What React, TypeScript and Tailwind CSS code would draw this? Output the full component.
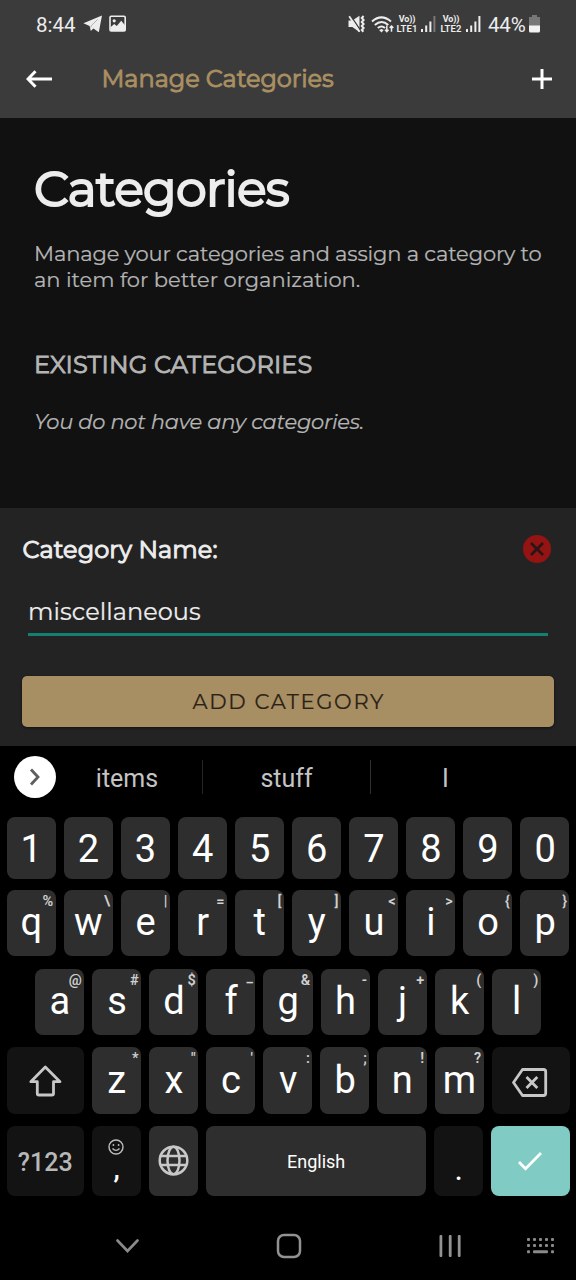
import React from 'react';

const numberRow = ['1', '2', '3', '4', '5', '6', '7', '8', '9', '0'];
const rowOne = [['q', '%'], ['w', '\\'], ['e', '|'], ['r', '='], ['t', '['], ['y', ']'], ['u', '<'], ['i', '>'], ['o', '{'], ['p', '}']];
const rowTwo = [['a', '@'], ['s', '#'], ['d', '$'], ['f', '_'], ['g', '&'], ['h', '-'], ['j', '+'], ['k', '('], ['l', ')']];
const rowThree = [['z', '*'], ['x', '"'], ['c', "'"], ['v', ':'], ['b', ';'], ['n', '!'], ['m', '?']];

function Key({ label, hint }: { label: string; hint?: string }) {
  return (
    <div className="relative flex h-full w-[49.1px] shrink-0 justify-center rounded-lg bg-[#2e2e2e] pt-[13.2px] text-[38px] leading-[38px] text-white">
      <span className="pl-[0.5px]">{label}</span>
      {hint && (
        <span className={`absolute right-[2.5px] text-[14.5px] leading-[16px] font-semibold text-[#d0d0d0] ${hint === '_' ? 'top-[1px]' : 'top-[4px]'}`}>{hint}</span>
      )}
    </div>
  );
}

function VoLte({ n }: { n: number }) {
  return (
    <div className="flex w-[22px] flex-col items-center text-[#ededed]">
      <span className="text-[9px] leading-[10px] font-bold tracking-[-0.1px]">Vo))</span>
      <span className="text-[9.5px] leading-[10px] font-semibold tracking-[0.1px]">LTE{n}</span>
    </div>
  );
}

function Signal({ dim }: { dim?: boolean }) {
  return (
    <svg className="h-4 w-[15px]" viewBox="0 0 15 16" fill="#ededed">
      <rect x="0" y="13" width="2" height="3" />
      <rect x="4.2" y="9.5" width="2" height="6.5" />
      <rect x="8.4" y="5.5" width="2" height="10.5" />
      <rect x="12.4" y="0" width="2" height="16" fill={dim ? '#777777' : '#ededed'} />
    </svg>
  );
}

function StatusBar() {
  return (
    <div className="flex h-[48px] items-center pl-9 font-[Roboto,sans-serif] text-[#ededed]">
      <span className="w-[47px] pt-[2px] text-[20.5px] leading-6">8:44</span>
      <svg className="h-[18px] w-[20px]" viewBox="0 0 20 18" fill="#ededed">
        <path d="M.4 8.300 19 .5l-3.200 16.800-5.400-3.700-2.600 2.300-1.200-5z" />
        <path d="m7.600 12.600 1-2.300 6.200-6" fill="none" stroke="#8a8a8a" strokeWidth=".6" />
      </svg>
      <svg className="ml-[6px] h-[18px] w-[18px]" viewBox="0 0 18 18" fill="none">
        <rect x="1" y="1.2" width="15.2" height="14.8" rx="1.2" stroke="#ededed" strokeWidth="1.6" />
        <circle cx="5.2" cy="5.8" r="1.6" fill="#ededed" />
        <path d="m1.5 12.2 3.700-3.100 2.600 2 4.400-5.300 4.200 5V16H1.5z" fill="#ededed" />
      </svg>
      <svg className="ml-[221px] h-[18px] w-[18px]" viewBox="0 0 18 18" fill="none" stroke="#ededed">
        <path d="M.5 5.600h3.800L11.500.8v16.200l-7.200-5H.5z" fill="#ededed" stroke="none" />
        <path d="m2.400.4 10.600 15.800" stroke="#3b3b3b" strokeWidth="1.4" />
        <path d="m1.200 1.200 10.300 15.600" strokeWidth="1.8" />
        <path d="m15.600 1-1.800 2 1.800 2-1.800 2 1.800 2-1.800 2 1.800 2-1.800 2 1.600 1.700" strokeWidth="2" />
      </svg>
      <svg className="ml-[5px] h-[17px] w-[23px]" viewBox="0 0 23 17" fill="none" stroke="#ededed" strokeWidth="2">
        <path d="M1 5.400Q10.400-2.700 20 5.400M3.800 8.900q6.800-5.800 13.500 0M6.800 12q3.700-3.100 7.200 0" />
        <path d="m8.100 14 2.400 2.500 2.200-2.500-2.200-1z" fill="#ededed" stroke="none" />
        <path d="M15.800 9.500v6M14 13.800l1.800 1.800 1.800-1.800M20.500 15.800V10m-1.800 1.900 1.800-1.800 1.800 1.800" strokeWidth="1.500" />
      </svg>
      <div className="ml-[2px]"><VoLte n={1} /></div>
      <div className="ml-[3px]"><Signal dim /></div>
      <div className="ml-[4px]"><VoLte n={2} /></div>
      <div className="ml-[4px]"><Signal /></div>
      <span className="ml-[7px] w-[41px] pt-[2px] text-[20.5px] leading-6 tracking-[-0.2px]">44%</span>
      <svg className="h-[18px] w-[11px]" viewBox="0 0 11 18">
        <path d="M3 0h5v2h3v9H0V2h3z" fill="#777777" />
        <path d="M0 10.500h11V16a1.500 1.500 0 0 1-1.500 1.500h-8A1.500 1.500 0 0 1 0 16z" fill="#f2f2f2" />
      </svg>
    </div>
  );
}

function Keyboard() {
  return (
    <section className="flex h-[534px] flex-col bg-black font-[Roboto,sans-serif]">
      <div className="flex h-[62px] items-center pl-[14px] text-[25px] text-[#c4c4c4]">
        <div className="flex h-[42px] w-[42px] items-center justify-center rounded-full bg-white">
          <svg className="h-[18px] w-[12px]" viewBox="0 0 12 18" fill="none" stroke="#5e5e5e" strokeWidth="2.800"><path d="m2 1.500 7 7.500-7 7.500" /></svg>
        </div>
        <span className="w-[142px] pt-[3px] text-center">items</span>
        <span className="mr-[1px] ml-[4px] h-[34px] w-px bg-[#242424]" />
        <span className="w-[165px] pt-[3px] text-center">stuff</span>
        <span className="ml-[1px] h-[34px] w-px bg-[#303030]" />
        <span className="w-[149px] pt-[3px] text-center">I</span>
      </div>
      <div className="mt-[9px] flex h-[62px] gap-2 px-[6.5px]">{numberRow.map((n) => <Key key={n} label={n} />)}</div>
      <div className="mt-[11px] flex h-[66px] gap-2 px-[6.5px]">{rowOne.map(([k, h]) => <Key key={k} label={k} hint={h} />)}</div>
      <div className="mt-[12.700px] flex h-[66px] justify-center gap-2">{rowTwo.map(([k, h]) => <Key key={k} label={k} hint={h} />)}</div>
      <div className="mt-[12.700px] flex h-[66.300px] gap-2 px-[6.5px]">
        <div className="flex w-[77.500px] items-center justify-center rounded-lg bg-[#131313]">
          <svg className="h-[32px] w-[34px]" viewBox="0 0 34 32" fill="none" stroke="#c7c7c7" strokeWidth="2.800" strokeLinejoin="round">
            <path d="M17.300 2 2.800 16.700h6.500V28.500q0 1.500 1.500 1.500h13.200q1.500 0 1.500-1.500V16.700h6.500z" />
          </svg>
        </div>
        {rowThree.map(([k, h]) => <Key key={k} label={k} hint={h} />)}
        <div className="flex flex-1 items-center justify-center rounded-lg bg-[#131313]">
          <svg className="mt-[3px] mr-[2px] h-[29px] w-[36px]" viewBox="0 0 36 29" fill="none" stroke="#c7c7c7" strokeWidth="2.800" strokeLinejoin="round">
            <path d="M10.500 1.500h21q2.200 0 2.200 2.200v21.600q0 2.200-2.200 2.200h-21L1.500 14.500zM14.500 9l10.800 11M25.300 9 14.500 20" />
          </svg>
        </div>
      </div>
      <div className="mt-[12.500px] flex h-[69.500px] gap-2 px-[6.5px]">
        <div className="flex w-[77.500px] items-center justify-center rounded-lg bg-[#131313] pt-[3px] text-[25px] font-medium tracking-[0.1px] text-[#b8b8b8]">?123</div>
        <div className="flex w-[49.1px] flex-col items-center rounded-lg bg-[#131313] pt-[13px]">
          <svg className="mr-[1px] h-[16px] w-[16px] shrink-0" viewBox="0 0 16 16" fill="none" stroke="#bdbdbd" strokeWidth="1.400">
            <circle cx="8" cy="8" r="7" /><path d="M4.500 9.500q3.500 3.700 7 0" /><circle cx="5.400" cy="6" r=".9" fill="#bdbdbd" stroke="none" /><circle cx="10.600" cy="6" r=".9" fill="#bdbdbd" stroke="none" />
          </svg>
          <span className="mt-[-1px] text-[28px] leading-[30px] font-medium text-white">,</span>
        </div>
        <div className="flex w-[49.1px] items-center justify-center rounded-lg bg-[#2e2e2e]">
          <svg className="h-[31px] w-[31px]" viewBox="0 0 31 31" fill="none" stroke="#c8c8c8" strokeWidth="2.500">
            <circle cx="15.500" cy="15.500" r="13.800" /><ellipse cx="15.500" cy="15.500" rx="6" ry="13.800" /><path d="M2.500 11h26M2.500 20h26" />
          </svg>
        </div>
        <div className="flex flex-1 items-center justify-center rounded-lg bg-[#2e2e2e] pt-[2px] text-[18px] text-white">English</div>
        <div className="flex w-[49.1px] justify-center rounded-lg bg-[#131313] pt-[25px] text-[32px] leading-[36px] text-white">.</div>
        <div className="flex w-[78.300px] items-center justify-center rounded-lg bg-[#80cbc4]">
          <svg className="h-[20px] w-[26px]" viewBox="0 0 26 20" fill="none" stroke="#ffffff" strokeWidth="2.800"><path d="m2 11 6.500 6.700L24 2" /></svg>
        </div>
      </div>
      <nav className="mt-[22px] flex h-[56px] items-center pl-[116px]">
        <svg className="h-[14px] w-[23px]" viewBox="0 0 23 14" fill="none" stroke="#8a8a8a" strokeWidth="2.600" strokeLinecap="round"><path d="m1.500 1.500 10 10.500 10-10.500" /></svg>
        <svg className="ml-[137px] h-[26px] w-[26px]" viewBox="0 0 26 26" fill="none" stroke="#929292" strokeWidth="2.500"><rect x="2" y="2" width="22" height="22" rx="6" /></svg>
        <svg className="ml-[137px] h-[24px] w-[23px]" viewBox="0 0 23 24" fill="#929292"><rect x="0.500" y="1" width="2.800" height="22" rx="1" /><rect x="9.800" y="1" width="2.800" height="22" rx="1" /><rect x="18.800" y="1" width="2.800" height="22" rx="1" /></svg>
        <svg className="ml-[64px] h-[17px] w-[30px]" viewBox="0 0 30 17" fill="#8a8a8a">
          {[0, 6, 12, 18, 24].map((x) => <g key={x}><rect x={x + 1} y="1" width="3" height="3" rx="1" /><rect x={x + 1} y="7" width="3" height="3" rx="1" /></g>)}
          <rect x="1" y="13.200" width="3" height="3" rx="1" /><rect x="7" y="13.200" width="15" height="3" rx="1" /><rect x="25" y="13.200" width="3" height="3" rx="1" />
        </svg>
      </nav>
    </section>
  );
}

export default function App() {
  return (
    <div className="flex h-[1280px] w-[576px] flex-col overflow-hidden bg-[#111111] font-[Montserrat,Inter,sans-serif]">
      <header className="h-[118px] bg-[#3b3b3b]">
        <StatusBar />
        <div className="flex h-[62px] items-center pl-[26px]">
          <svg className="h-[18px] w-[27px]" viewBox="0 0 27 18" fill="none" stroke="#ffffff" strokeWidth="3"><path d="M9.500 1.200 2 9l7.500 7.800M2 9h24" /></svg>
          <h1 className="ml-[48.5px] w-[400px] text-[24px] leading-8 font-normal tracking-[-0.05px] [-webkit-text-stroke:0.9px_#a98f62] text-[#a98f62]">Manage Categories</h1>
          <svg className="ml-[30.5px] h-[20px] w-[20px]" viewBox="0 0 20 20" stroke="#ffffff" strokeWidth="3"><path d="M0 10h20M10 0v20" /></svg>
        </div>
      </header>
      <main className="h-[390px] pt-[41px] pl-[34px]">
        <h2 className="text-[49px] leading-[60px] font-normal tracking-[-0.7px] [-webkit-text-stroke:2px_#ededed] whitespace-nowrap text-[#ededed]">Categories</h2>
        <p className="mt-[22px] text-[21px] leading-[26px] whitespace-nowrap text-[#b5b5b5] [-webkit-text-stroke:0.2px_#b5b5b5]"><span className="tracking-[-0.15px]">Manage your categories and assign a category to</span><br /><span className="tracking-[-0.03px]">an item for better organization.</span></p>
        <h3 className="mt-[57px] text-[24px] leading-[30px] font-normal tracking-[0.18px] [-webkit-text-stroke:0.9px_#b5b5b5] whitespace-nowrap text-[#b5b5b5]">EXISTING CATEGORIES</h3>
        <p className="mt-[29px] text-[21px] leading-[26px] tracking-[-0.25px] whitespace-nowrap text-[#b5b5b5] italic [-webkit-text-stroke:0.2px_#b5b5b5]">You do not have any categories.</p>
      </main>
      <section className="h-[238px] bg-[#232323] px-[22px] pt-[26px]">
        <div className="flex h-[30px] items-center justify-between pr-[3px]">
          <label className="pt-[1px] pl-[0.5px] text-[24px] leading-[30px] font-normal tracking-[0.1px] [-webkit-text-stroke:1px_#ededed] text-[#ededed]">Category Name:</label>
          <svg className="h-[28px] w-[28px]" viewBox="0 0 28 28" fill="none"><circle cx="14" cy="14" r="14" fill="#941313" /><path d="m8 8 12 12M20 8 8 20" stroke="#2b1515" strokeWidth="2.800" /></svg>
        </div>
        <div className="mx-[6px] mt-[29px] h-[43px] border-b-[3px] border-[#138072] text-[24px] leading-[38px] tracking-[0.05px] text-[#ededed] [-webkit-text-stroke:0.2px_#ededed]">miscellaneous</div>
        <button className="mt-[40px] flex h-[51px] w-[531.500px] items-center justify-center rounded-[5px] bg-[#a78e63] pl-[2px] text-[21px] tracking-[1.700px] text-[#2b2216] shadow-[0_1px_3px_#0008] [-webkit-text-stroke:0.2px_#2b2216]">ADD CATEGORY</button>
      </section>
      <Keyboard />
    </div>
  );
}
